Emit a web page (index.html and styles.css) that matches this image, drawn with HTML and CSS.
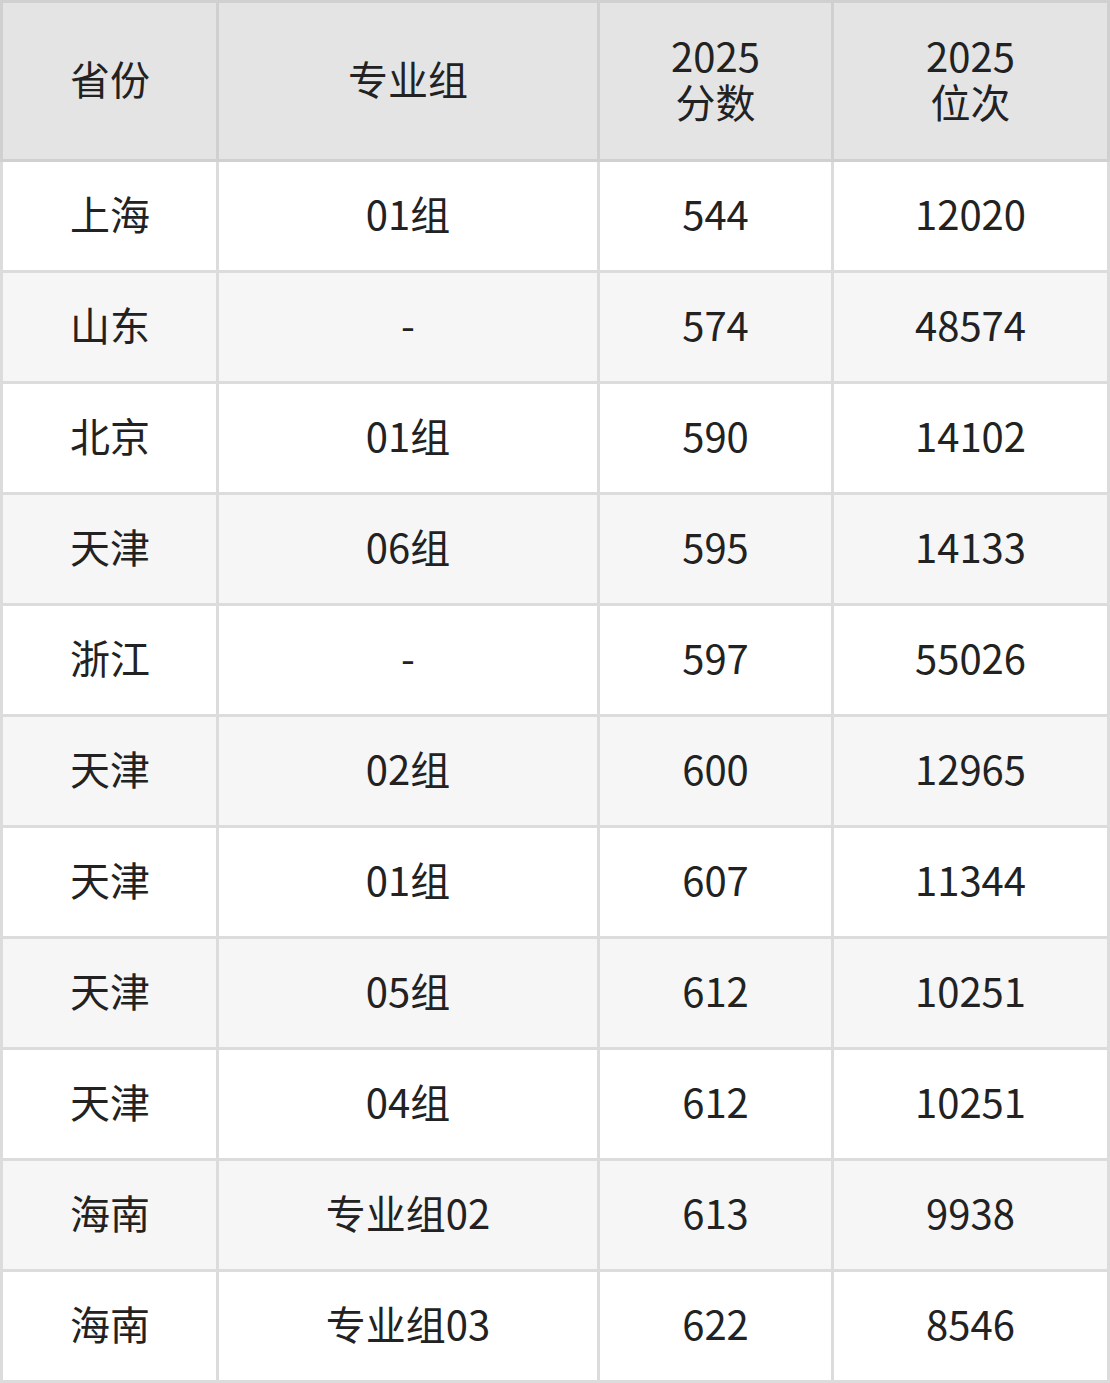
FILE: index.html
```html
<!DOCTYPE html>
<html lang="zh">
<head>
<meta charset="utf-8">
<link rel="stylesheet" href="styles.css">
</head>
<body>
<table class="score-table">
  <colgroup>
    <col class="c1"><col class="c2"><col class="c3"><col class="c4">
  </colgroup>
  <thead>
    <tr>
      <th>省份</th>
      <th>专业组</th>
      <th>2025<br>分数</th>
      <th>2025<br>位次</th>
    </tr>
  </thead>
  <tbody>
    <tr><td>上海</td><td>01组</td><td>544</td><td>12020</td></tr>
    <tr><td>山东</td><td>-</td><td>574</td><td>48574</td></tr>
    <tr><td>北京</td><td>01组</td><td>590</td><td>14102</td></tr>
    <tr><td>天津</td><td>06组</td><td>595</td><td>14133</td></tr>
    <tr><td>浙江</td><td>-</td><td>597</td><td>55026</td></tr>
    <tr><td>天津</td><td>02组</td><td>600</td><td>12965</td></tr>
    <tr><td>天津</td><td>01组</td><td>607</td><td>11344</td></tr>
    <tr><td>天津</td><td>05组</td><td>612</td><td>10251</td></tr>
    <tr><td>天津</td><td>04组</td><td>612</td><td>10251</td></tr>
    <tr><td>海南</td><td>专业组02</td><td>613</td><td>9938</td></tr>
    <tr><td>海南</td><td>专业组03</td><td>622</td><td>8546</td></tr>
  </tbody>
</table>
</body>
</html>
```

FILE: styles.css
```css
html, body {
  margin: 0;
  padding: 0;
  background: #ffffff;
}

.score-table {
  border-collapse: collapse;
  table-layout: fixed;
  width: 1110px;
  font-family: "Noto Sans CJK SC", "Noto Sans", sans-serif;
  font-size: 40px;
  color: #222222;
  border: 3px solid #dcdcdc;
}

.c1 { width: 216px; }
.c2 { width: 381px; }
.c3 { width: 234px; }
.c4 { width: 276px; }

.score-table th {
  background: #e4e4e4;
  border: 3px solid #d0d0d0;
  font-weight: normal;
  height: 150px;
  padding: 0 0 6px 0;
  line-height: 46px;
  text-align: center;
  vertical-align: middle;
}

.score-table th:first-child {
  text-align: left;
  padding-left: 67px;
}

.score-table td {
  border: 3px solid #dcdcdc;
  height: 102px;
  padding: 0 0 6px 0;
  text-align: center;
  vertical-align: middle;
  line-height: 46px;
}

.score-table td:first-child {
  text-align: left;
  padding-left: 67px;
}

.score-table tbody tr:nth-child(even) td {
  background: #f6f6f6;
}
```
